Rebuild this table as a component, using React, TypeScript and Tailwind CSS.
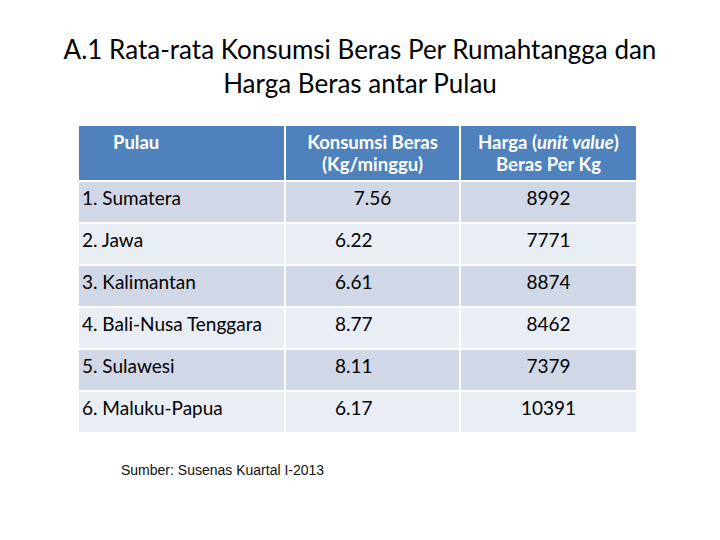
import React from "react";

type Row = { pulau: string; konsumsi: string; harga: string };

const rows: Row[] = [
  { pulau: "1. Sumatera", konsumsi: "7.56", harga: "8992" },
  { pulau: "2. Jawa", konsumsi: "6.22", harga: "7771" },
  { pulau: "3. Kalimantan", konsumsi: "6.61", harga: "8874" },
  { pulau: "4. Bali-Nusa Tenggara", konsumsi: "8.77", harga: "8462" },
  { pulau: "5. Sulawesi", konsumsi: "8.11", harga: "7379" },
  { pulau: "6. Maluku-Papua", konsumsi: "6.17", harga: "10391" },
];

export default function App() {
  return (
    <div className="relative h-[540px] w-[720px] bg-white font-['Lato','Open_Sans',sans-serif] text-black">
      <h1 className="pt-[32px] text-center text-[26px] leading-[34px] font-normal">
        A.1 Rata-rata Konsumsi Beras Per Rumahtangga dan
        <br />
        Harga Beras antar Pulau
      </h1>

      <div className="ml-[79px] mt-[26px] w-[557px]">
        <div className="grid grid-cols-[205px_175px_177px] bg-[#4f81bd] text-[18.5px] font-bold leading-[22px] text-white">
          <div className="h-[54px] pl-[34px] pt-[5px]">Pulau</div>
          <div className="h-[54px] border-l-2 border-white pt-[5px] text-center">
            Konsumsi Beras
            <br />
            (Kg/minggu)
          </div>
          <div className="h-[54px] border-l-2 border-white pt-[5px] text-center">
            Harga (<i>unit value</i>)
            <br />
            Beras Per Kg
          </div>
        </div>

        {rows.map((r, i) => (
          <div
            key={r.pulau}
            className={
              "grid grid-cols-[205px_175px_177px] border-t-2 border-white text-[19px] leading-[22px] " +
              (i % 2 === 0 ? "bg-[#d0d8e8]" : "bg-[#e9edf4]")
            }
          >
            <div className="h-[40px] pl-[3px] pt-[5px]">{r.pulau}</div>
            <div
              className={
                "h-[40px] border-l-2 border-white pt-[5px] " +
                (i === 0 ? "text-center" : "pl-[49px]")
              }
            >
              {r.konsumsi}
            </div>
            <div className="h-[40px] border-l-2 border-white pt-[5px] text-center">{r.harga}</div>
          </div>
        ))}
      </div>

      <p className="ml-[121px] mt-[28px] font-['Liberation_Sans',Arial,sans-serif] text-[14px] text-[#111]">
        Sumber: Susenas Kuartal I-2013
      </p>
    </div>
  );
}
